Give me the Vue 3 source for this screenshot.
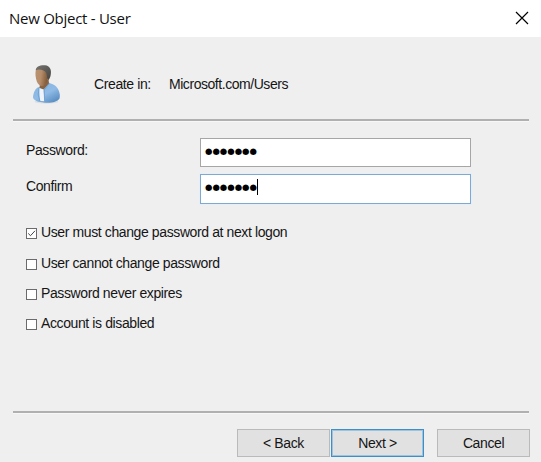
<script setup>
import { ref } from 'vue'

const fields = [
  { label: 'Password:', focused: false },
  { label: 'Confirm', focused: true },
]
const options = ref([
  { label: 'User must change password at next logon', checked: true },
  { label: 'User cannot change password', checked: false },
  { label: 'Password never expires', checked: false },
  { label: 'Account is disabled', checked: false },
])
</script>

<template>
  <div class="dialog">
    <header class="titlebar">
      <h1 class="title">New Object - User</h1>
      <svg class="close" viewBox="0 0 14 14" width="14" height="14">
        <path d="M1 1L13 13M13 1L1 13" stroke="#000" stroke-width="1.2" fill="none" />
      </svg>
    </header>

    <section class="context">
      <svg class="avatar" viewBox="0 0 30 42" width="30" height="42">
        <defs>
          <linearGradient id="skin" x1="0" y1="0" x2="1" y2="0.2">
            <stop offset="0" stop-color="#b99372" />
            <stop offset="0.5" stop-color="#b58d6a" />
            <stop offset="1" stop-color="#80593a" />
          </linearGradient>
          <linearGradient id="coat" x1="0" y1="0" x2="0.7" y2="1">
            <stop offset="0" stop-color="#86b4df" />
            <stop offset="0.6" stop-color="#8fbbe6" />
            <stop offset="1" stop-color="#5c90c4" />
          </linearGradient>
          <linearGradient id="hair" x1="0" y1="0" x2="1" y2="1">
            <stop offset="0" stop-color="#74736f" />
            <stop offset="1" stop-color="#474541" />
          </linearGradient>
        </defs>
        <ellipse cx="15.5" cy="38.7" rx="12" ry="2" fill="#dcdfe2" />
        <path d="M8 24C4 25 2.5 30 2 34C2 37 6 38.8 11 39.2C18 40.5 26 39.5 28.5 35.5C30 31 27 24.5 24 22.5C21 20.5 18 20 17 19L11 25Z" fill="url(#coat)" />
        <path d="M9 20L17.5 16L18 20.5L12.5 26.5L8.5 25Z" fill="#8a6442" />
        <path d="M8.2 25L12.5 26.5L13.5 38.2L9 38Z" fill="#eef4fa" />
        <path d="M8 25L7.2 32L9 38M18 20.5L13.2 27L13.6 38.5" stroke="#6a9ccd" stroke-width="0.8" fill="none" />
        <path d="M5 6C7 4 14 5 16 8C18 12 17.5 18 14 21.5C11 24.5 7.5 22.5 6 19C4.4 15 4 10 5 6Z" fill="url(#skin)" />
        <path d="M4.8 7.2C4.6 4 9 1.9 14 2.3C19 2.8 20.8 7 19.7 12C19.2 14.5 18.5 16 17.3 17L16 14.5C16 11 15 8.8 13 7.8C10 6.4 7 6 4.8 7.2Z" fill="url(#hair)" />
      </svg>
      <span class="create">Create in:</span>
      <span class="path">Microsoft.com/Users</span>
    </section>

    <hr class="rule" />

    <section class="fields">
      <div v-for="f in fields" :key="f.label" class="field">
        <span class="label">{{ f.label }}</span>
        <div class="input" :class="{ focused: f.focused }">
          <span class="mask">●●●●●●●</span>
          <i v-if="f.focused" class="caret"></i>
        </div>
      </div>
    </section>

    <section class="options">
      <div v-for="o in options" :key="o.label" class="option" @click="o.checked = !o.checked">
        <span class="box">
          <svg v-if="o.checked" viewBox="0 0 9 9" width="9" height="9">
            <path d="M1.2 4.4L3.5 6.7L8 1.8" stroke="#444" stroke-width="1" fill="none" />
          </svg>
        </span>
        <span>{{ o.label }}</span>
      </div>
    </section>

    <hr class="rule" />

    <footer class="actions">
      <button class="btn">&lt; Back</button>
      <button class="btn primary">Next &gt;</button>
      <button class="btn cancel">Cancel</button>
    </footer>
  </div>
</template>

<style>
body {
  margin: 0;
  background: #efefef;
}
</style>

<style scoped>
.dialog {
  box-sizing: border-box;
  width: 541px;
  height: 462px;
  overflow: hidden;
  display: flex;
  flex-direction: column;
  background: #efefef;
  color: #151515;
  font: 14px/16px "Liberation Sans", Arial, sans-serif;
  letter-spacing: -0.39px;
}
.titlebar {
  box-sizing: border-box;
  height: 37px;
  flex: none;
  display: flex;
  align-items: center;
  justify-content: space-between;
  padding: 0 12px 1px 9px;
  background: #fff;
}
.title {
  margin: 0;
  font: 400 15px/20px "Open Sans", "Noto Sans", sans-serif;
  letter-spacing: -0.27px;
  color: #111;
}
.context {
  box-sizing: border-box;
  height: 82px;
  flex: none;
  display: flex;
  align-items: flex-start;
  padding: 27px 0 0 31px;
}
.avatar {
  flex: none;
  margin-top: -1px;
}
.create {
  width: 75px;
  margin: 12px 0 0 33px;
}
.path {
  margin-top: 12px;
  letter-spacing: -0.45px;
}
.rule {
  box-sizing: border-box;
  width: 516px;
  height: 3px;
  flex: none;
  margin: 0 0 0 13px;
  border: 0;
  border-top: 2px solid #b0b0b0;
  border-bottom: 1px solid #f7f7f7;
}
.fields {
  display: flex;
  flex-direction: column;
  gap: 7px;
  padding: 16px 0 0 26px;
}
.field {
  display: flex;
  height: 29px;
}
.label {
  width: 174px;
  padding-top: 4px;
}
.input {
  box-sizing: border-box;
  width: 271px;
  height: 29px;
  display: flex;
  align-items: flex-start;
  padding: 4px 0 0 4px;
  border: 1px solid #a6a6a6;
  background: #fff;
}
.input.focused {
  height: 30px;
  border-color: #7fa9d0;
  box-shadow: 0 0 0 1px #e4eff8;
}
.mask {
  width: 52px;
  font: 8.5px/16px "DejaVu Sans", sans-serif;
  letter-spacing: 0;
  color: #000;
  white-space: nowrap;
}
.caret {
  width: 1px;
  height: 16px;
  background: #000;
}
.options {
  display: flex;
  flex-direction: column;
  gap: 14px;
  height: 208px;
  flex: none;
  box-sizing: border-box;
  padding: 21px 0 0 26px;
}
.option {
  display: flex;
  align-items: flex-start;
  gap: 4px;
}
.option:first-child {
  margin-bottom: 1px;
}
.box {
  box-sizing: border-box;
  width: 11px;
  height: 11px;
  margin-top: 4px;
  display: flex;
  border: 1px solid #6b6b6b;
  background: #fff;
}
.actions {
  display: flex;
  padding: 15px 0 0 237px;
}
.btn {
  box-sizing: border-box;
  width: 93px;
  height: 28px;
  padding: 0;
  border: 1px solid #bababa;
  border-radius: 0;
  background: #e1e1e1;
  color: #151515;
  font: inherit;
  letter-spacing: inherit;
}
.btn.primary {
  margin-left: 1px;
  border: 1px solid #3f8fc6;
  box-shadow: inset 0 0 0 1px #9cc4df;
}
.btn.cancel {
  margin-left: 13px;
}
</style>
